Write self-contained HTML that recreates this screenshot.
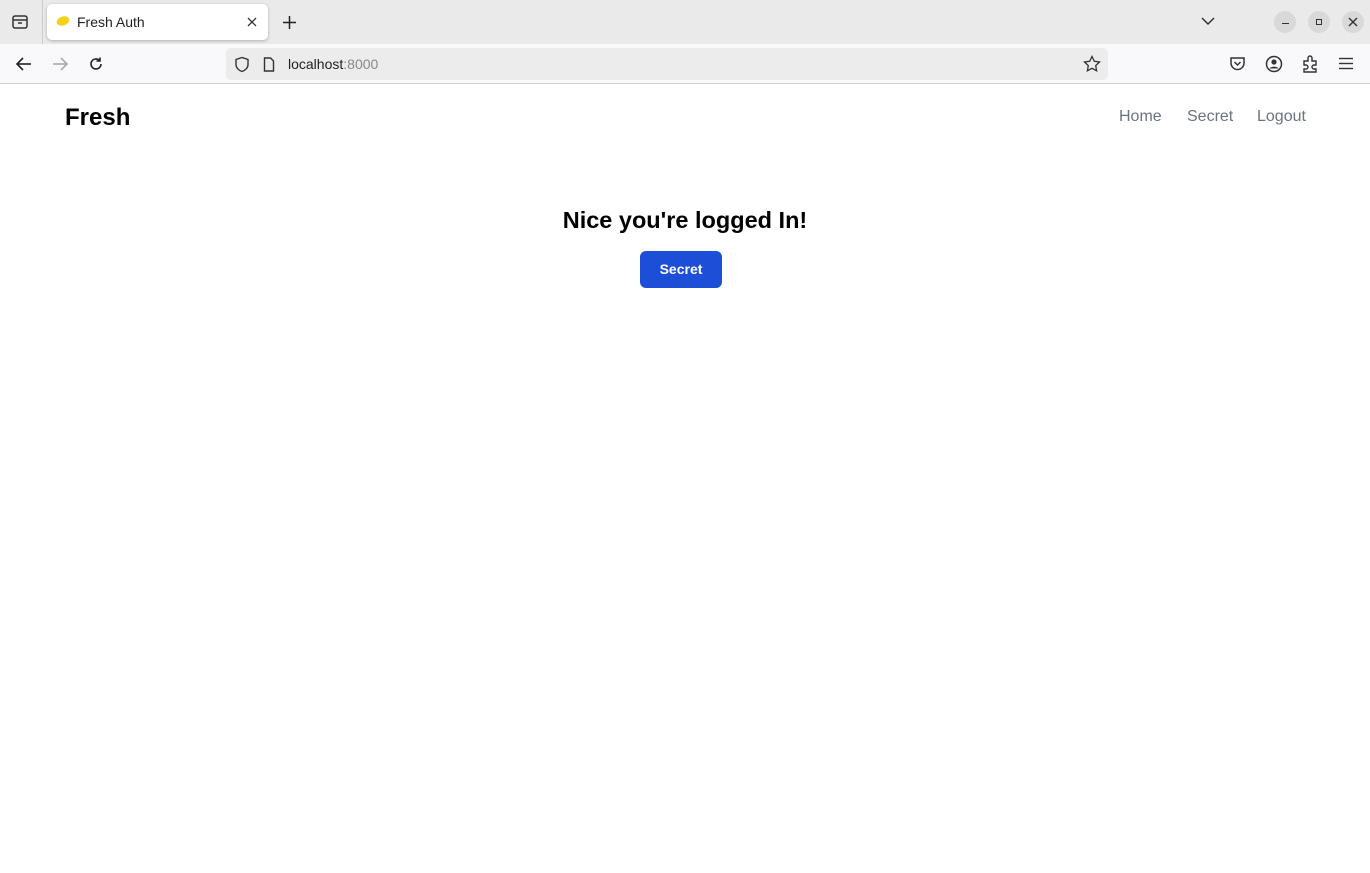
<!DOCTYPE html>
<html><head><meta charset="utf-8"><style>
*{box-sizing:border-box;margin:0;padding:0}
body{width:1370px;height:873px;overflow:hidden;background:#fff;font-family:"Liberation Sans",sans-serif;position:relative}
.tabbar{position:absolute;left:0;top:0;width:1370px;height:44px;background:#eaeaea}
.tab{position:absolute;left:47px;top:4px;width:221px;height:36px;background:#fff;border-radius:5px;box-shadow:0 1px 3px rgba(0,0,0,.25)}
.tab span{position:absolute;left:30px;top:10px;font-size:14px;color:#222}
.navbar{position:absolute;left:0;top:44px;width:1370px;height:40px;background:#f9f9fb;border-bottom:1px solid #d0d0d0}
.url{position:absolute;left:226px;top:4px;width:882px;height:32px;background:#ececec;border-radius:5px}
.url span{position:absolute;left:62px;top:8px;font-size:14px;color:#222}
.ic{position:absolute}
.wbtn{position:absolute;top:11px;width:22px;height:22px;border-radius:50%;background:#d9d9d9}
.page{position:absolute;left:0;top:85px;width:1370px}
.logo{position:absolute;left:65px;top:19px;font-size:24px;font-weight:bold;color:#000}
.nav a{position:absolute;top:23px;font-size:16px;color:#6b7280;text-decoration:none}
h1{position:absolute;left:0;width:1370px;text-align:center;top:207px;font-size:23.5px;font-weight:bold;color:#000}
.btn{position:absolute;left:640px;top:251px;width:82px;height:37px;background:#1d4ed8;border-radius:6px;color:#fff;font-size:14px;font-weight:bold;text-align:center;line-height:37px}
</style></head><body>
<div class="tabbar">
 <svg class="ic" style="left:11px;top:13px" width="18" height="18" viewBox="0 0 18 18" fill="none" stroke="#333" stroke-width="1.5"><rect x="2" y="3" width="14" height="12" rx="2"/><line x1="2" y1="7" x2="16" y2="7"/><line x1="7" y1="10" x2="11" y2="10"/></svg>
 <div style="position:absolute;left:42px;top:0;width:1px;height:44px;background:#ccc"></div>
 <div class="tab">
  <svg class="ic" style="left:9px;top:11px" width="14" height="12" viewBox="0 0 14 12"><ellipse cx="7" cy="6" rx="6.5" ry="4.5" fill="#f2d21b" transform="rotate(-20 7 6)"/></svg>
  <span>Fresh Auth</span>
  <svg class="ic" style="left:199px;top:12px" width="12" height="12" viewBox="0 0 12 12" stroke="#333" stroke-width="1.3"><line x1="2" y1="2" x2="10" y2="10"/><line x1="10" y1="2" x2="2" y2="10"/></svg>
 </div>
 <svg class="ic" style="left:282px;top:15px" width="15" height="15" viewBox="0 0 15 15" stroke="#222" stroke-width="1.5"><line x1="7.5" y1="1" x2="7.5" y2="14"/><line x1="1" y1="7.5" x2="14" y2="7.5"/></svg>
 <svg class="ic" style="left:1201px;top:16px" width="14" height="10" viewBox="0 0 14 10" fill="none" stroke="#333" stroke-width="1.5"><polyline points="1,2 7,8 13,2"/></svg>
 <div class="wbtn" style="left:1274px"><div style="position:absolute;left:8px;top:12px;width:7px;height:1px;background:#333"></div></div>
 <div class="wbtn" style="left:1308px"><div style="position:absolute;left:8px;top:8px;width:6px;height:6px;border:1px solid #333"></div></div>
 <div class="wbtn" style="left:1342px"><svg style="position:absolute;left:6px;top:6px" width="10" height="10" viewBox="0 0 10 10" stroke="#333" stroke-width="1.4"><line x1="1" y1="1" x2="9" y2="9"/><line x1="9" y1="1" x2="1" y2="9"/></svg></div>
</div>
<div class="navbar">
 <svg class="ic" style="left:15px;top:12px" width="18" height="16" viewBox="0 0 18 16" fill="none" stroke="#222" stroke-width="1.6"><line x1="2" y1="8" x2="16" y2="8"/><polyline points="8,2 2,8 8,14"/></svg>
 <svg class="ic" style="left:51px;top:12px" width="18" height="16" viewBox="0 0 18 16" fill="none" stroke="#aaa" stroke-width="1.6"><line x1="2" y1="8" x2="16" y2="8"/><polyline points="10,2 16,8 10,14"/></svg>
 <svg class="ic" style="left:88px;top:12px" width="16" height="16" viewBox="0 0 16 16" fill="none" stroke="#222" stroke-width="1.6"><path d="M13 8a5 5 0 1 1-1.5-3.6"/><polyline points="12,1.5 12,5 8.5,5"/></svg>
 <div class="url">
  <svg class="ic" style="left:8px;top:8px" width="16" height="17" viewBox="0 0 16 17" fill="none" stroke="#333" stroke-width="1.4"><path d="M8 1.5L2 3.5v5c0 3.5 3 6 6 7 3-1 6-3.5 6-7v-5z"/></svg>
  <svg class="ic" style="left:37px;top:9px" width="12" height="15" viewBox="0 0 12 15" fill="none" stroke="#333" stroke-width="1.4"><path d="M1.5 1h6l3 3v10h-9z"/></svg>
  <span>localhost<span style="position:static;color:#888">:8000</span></span>
  <svg class="ic" style="left:857px;top:7px" width="18" height="18" viewBox="0 0 18 18" fill="none" stroke="#333" stroke-width="1.3"><path d="M9 1.5l2.3 4.8 5.2.7-3.8 3.6.9 5.2L9 13.3l-4.6 2.5.9-5.2L1.5 7l5.2-.7z"/></svg>
 </div>
 <svg class="ic" style="left:1229px;top:12px" width="17" height="16" viewBox="0 0 17 16" fill="none" stroke="#333" stroke-width="1.5"><path d="M2 2h13v5a6.5 6.5 0 0 1-13 0z"/><polyline points="5.5,6 8.5,9 11.5,6"/></svg>
 <svg class="ic" style="left:1265px;top:11px" width="18" height="18" viewBox="0 0 18 18"><circle cx="9" cy="9" r="7.5" fill="none" stroke="#333" stroke-width="1.5"/><circle cx="9" cy="7" r="2.6" fill="#333"/><path d="M4.5 13.5c1.5-2.5 7.5-2.5 9 0" fill="#333"/></svg>
 <svg class="ic" style="left:1302px;top:10px" width="17" height="19" viewBox="0 0 17 19" fill="none" stroke="#333" stroke-width="1.4"><path d="M2 7h4V4a2 2 0 0 1 4 0v3h4v4h-2a2 2 0 0 0 0 4h2v3H2v-3h2a2 2 0 0 0 0-4H2z"/></svg>
 <svg class="ic" style="left:1339px;top:13px" width="14" height="13" viewBox="0 0 14 13" stroke="#333" stroke-width="1.4"><line x1="0" y1="1.5" x2="14" y2="1.5"/><line x1="0" y1="6.5" x2="14" y2="6.5"/><line x1="0" y1="11.5" x2="14" y2="11.5"/></svg>
</div>
<div class="page">
 <div class="logo">Fresh</div>
 <div class="nav"><a style="left:1119px">Home</a><a style="left:1187px">Secret</a><a style="left:1257px">Logout</a></div>
</div>
<h1>Nice you're logged In!</h1>
<div class="btn">Secret</div>
</body></html>
